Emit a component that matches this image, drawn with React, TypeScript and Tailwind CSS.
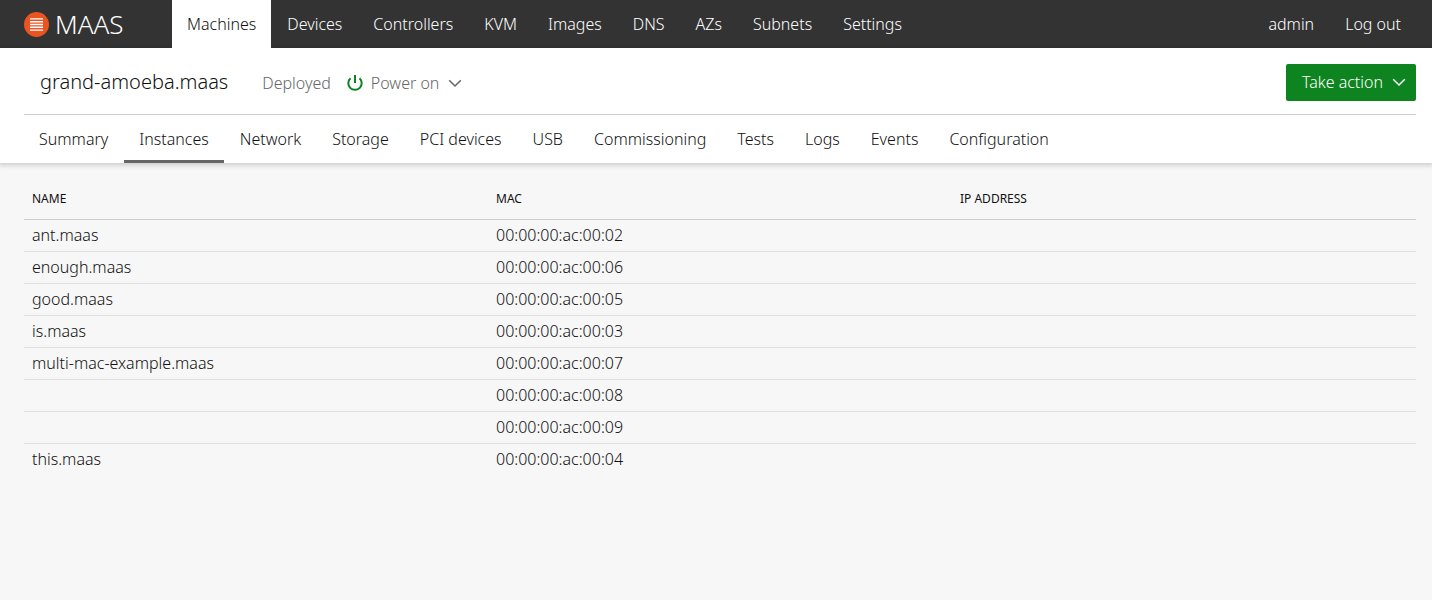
import React from "react";

const navLinks = ["Machines", "Devices", "Controllers", "KVM", "Images", "DNS", "AZs", "Subnets", "Settings"];
const userLinks = ["admin", "Log out"];

const tabs = [
  "Summary",
  "Instances",
  "Network",
  "Storage",
  "PCI devices",
  "USB",
  "Commissioning",
  "Tests",
  "Logs",
  "Events",
  "Configuration",
];

const instances = [
  { name: "ant.maas", macs: ["00:00:00:ac:00:02"] },
  { name: "enough.maas", macs: ["00:00:00:ac:00:06"] },
  { name: "good.maas", macs: ["00:00:00:ac:00:05"] },
  { name: "is.maas", macs: ["00:00:00:ac:00:03"] },
  {
    name: "multi-mac-example.maas",
    macs: ["00:00:00:ac:00:07", "00:00:00:ac:00:08", "00:00:00:ac:00:09"],
  },
  { name: "this.maas", macs: ["00:00:00:ac:00:04"] },
];

const Logo = () => (
  <svg className="h-[25px] w-[25px]" viewBox="0 0 25 25" aria-hidden="true">
    <circle cx="12.5" cy="12.5" r="12.5" fill="#e95420" />
    <path d="M6 6.900h13M6 9.700h13M6 12.500h13M6 15.300h13M6 18.100h13" stroke="#fff" strokeWidth="1.400" />
  </svg>
);

const Chevron = () => (
  <svg className="h-4 w-4 self-center" viewBox="0 0 16 16" fill="none" aria-hidden="true">
    <path d="M2.2 5.2L8 11l5.800-5.800" stroke="currentColor" strokeWidth="1.500" />
  </svg>
);

const PowerIcon = () => (
  <svg
    className="h-4 w-4 self-center"
    viewBox="0 0 16 16"
    fill="none"
    stroke="#0e8420"
    strokeWidth="2"
    aria-hidden="true"
  >
    <path d="M8 0v8" />
    <path d="M3.500 3.200a6.700 6.700 0 1 0 9 0" />
  </svg>
);

const TopNav = () => (
  <header className="flex h-12 bg-[#333] text-white">
    <a href="#" className="flex w-[172px] items-center gap-[6px] pl-6 text-[26px]">
      <Logo />
      MAAS
    </a>
    <nav className="flex flex-1 justify-between">
      <ul className="flex gap-px">
        {navLinks.map((link) => (
          <li key={link}>
            <a
              href="#"
              className={`flex h-12 items-center px-[15px] ${link === "Machines" ? "bg-white text-[#111]" : ""}`}
            >
              {link}
            </a>
          </li>
        ))}
      </ul>
      <ul className="flex gap-px pr-4">
        {userLinks.map((link) => (
          <li key={link}>
            <a href="#" className="flex h-12 items-center px-[15px]">
              {link}
            </a>
          </li>
        ))}
      </ul>
    </nav>
  </header>
);

const MachineHeader = () => (
  <section className="bg-white pr-4 pl-6 shadow-[0_1px_5px_1px_rgba(17,17,17,0.2)]">
    <div className="flex items-start justify-between border-b border-[#cdcdcd] pt-4 pb-[13px]">
      <div className="flex items-baseline gap-4 pt-1 pl-4 text-[#666]">
        <h1 className="pr-[18px] text-xl text-[#111]">grand-amoeba.maas</h1>
        <span>Deployed</span>
        <button className="flex items-baseline gap-2">
          <PowerIcon />
          Power on
          <Chevron />
        </button>
      </div>
      <button className="flex h-[37px] items-center gap-2 rounded-xs bg-[#0e8420] pr-[9px] pb-px pl-4 text-white">
        Take action
        <Chevron />
      </button>
    </div>
    <nav>
      <ul className="flex gap-px">
        {tabs.map((tab) => (
          <li key={tab}>
            <a
              href="#"
              className={`flex h-12 items-center border-b-3 px-[15px] pt-[3px] ${
                tab === "Instances" ? "border-[#666]" : "border-transparent"
              }`}
            >
              {tab}
            </a>
          </li>
        ))}
      </ul>
    </nav>
  </section>
);

const InstancesTable = () => (
  <table className="w-full table-fixed text-left">
    <thead>
      <tr className="h-10 border-b border-[#cdcdcd] text-xs uppercase">
        <th className="px-2 pt-px font-normal">Name</th>
        <th className="px-2 pt-px font-normal">MAC</th>
        <th className="px-2 pt-px font-normal">IP address</th>
      </tr>
    </thead>
    <tbody>
      {instances.map(({ name, macs }) =>
        macs.map((mac, i) => (
          <tr key={mac} className="h-8 border-b border-[#dedede] last:border-b-0">
            <td className="px-2">{i === 0 ? name : ""}</td>
            <td className="px-2">{mac}</td>
            <td className="px-2"></td>
          </tr>
        ))
      )}
    </tbody>
  </table>
);

export default function App() {
  return (
    <div className="min-h-screen bg-[#f7f7f7] font-['Noto_Sans',sans-serif] text-base font-light text-[#111]">
      <TopNav />
      <MachineHeader />
      <main className="pt-4 pr-4 pl-6">
        <InstancesTable />
      </main>
    </div>
  );
}
